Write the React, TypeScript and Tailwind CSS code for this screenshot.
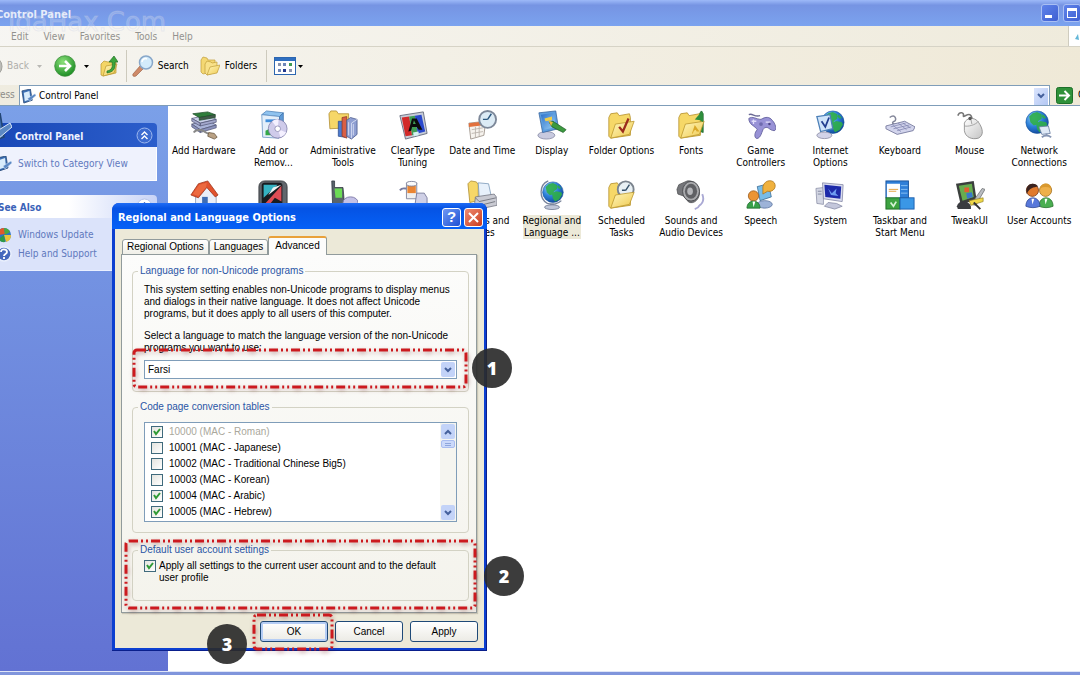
import type { ReactNode } from 'react';

const globe = (cx: number, cy: number, r: number) => (
  <g>
    <circle cx={cx} cy={cy} r={r} fill="url(#ocean)" stroke="#14509a" strokeWidth="0.6" />
    <path
      transform={`translate(${cx - r} ${cy - r}) scale(${r / 10})`}
      d="M3 5 6 2l4-1 4 2 0 4-3 2-1 3-3 1-3-3Zm6 6 4-2 5 1 1 2-3 5-4 2-2-3Zm6-8 3 3-2 1-2-2Z"
      fill="#2fae48"
      opacity="0.9"
    />
  </g>
);

const folder = (
  <g>
    <path d="M3 8 5 4l7-1 2 3 11-2 1 4v19L5 30 3 28Z" fill="#f6d868" stroke="#b08a22" strokeWidth="0.8" />
    <path d="m5 30 5-15 20-3-5 14Z" fill="url(#paperYellow)" stroke="#b89328" strokeWidth="0.8" />
  </g>
);

const art: Record<string, ReactNode> = {
  hardware: (
    <g strokeWidth="0.8">
      <path d="m3 15 9 6 17-5-9-5Z" fill="#a9b3d8" stroke="#55597a" />
      <path d="M3 15v3l9 6v-3Zm9 6v3l17-5v-3Z" fill="#8a92bd" stroke="#55597a" />
      <path d="m3 9 9 5 17-4-8-5Z" fill="#c9cfe8" stroke="#55597a" />
      <path d="M3 9v3l9 5v-3Zm9 5v3l17-4v-3Z" fill="#a3a8cc" stroke="#55597a" />
      <path d="m4 4 7 4 17-3-8-3Z" fill="#2f7d3b" stroke="#1f4f2a" />
      <path d="m11 8 17-3v3l-17 3Z" fill="#44584b" stroke="#1f4f2a" />
      <path d="M5 24c3-4 10-3 13 0 3 2 6 2 9 3" fill="none" stroke="#888" strokeWidth="2" />
      <path d="m21 24 6 1 3 4-3 2-7-3Z" fill="#b9a184" stroke="#66533b" />
    </g>
  ),
  programs: (
    <g strokeWidth="0.8">
      <path d="M4 5 9 1l18 2-4 4Z" fill="#8fc3ef" stroke="#4b7fb5" />
      <path d="m4 5 19 2-1 23-17-1Z" fill="#e4effa" stroke="#5f8fc0" />
      <path d="m23 7 4-4v23l-5 4Z" fill="#5d9ad8" stroke="#3b6fa8" />
      <path d="M8 10h11v3H8Z" fill="#3f8edc" />
      <path d="m8 22 6-3 1 8H8Z" fill="#33a848" />
      <circle cx="21" cy="20" r="10" fill="#cfcbea" stroke="#7a78a4" />
      <path d="M21 20 15 12a10 10 0 0 1 7-2Zm0 0 9 4a10 10 0 0 1-6 5Z" fill="#f4f0ff" />
      <circle cx="21" cy="20" r="3" fill="#fff" stroke="#8583ae" />
    </g>
  ),
  admin: (
    <g strokeWidth="0.8">
      <path d="M1 4 3 1h6l2 3h11v15L2 20Z" fill="#f6d768" stroke="#ac882c" />
      <path d="M11 12h7v17l-7-1Z" fill="#4c7bd0" stroke="#2c4c8c" />
      <path d="m15 8 5-1v23l-5-2Z" fill="#d95f45" stroke="#8b3827" />
      <path d="m20 11 4-3 7 2v16l-6 5-5-3Z" fill="#8f9fd2" stroke="#46558a" />
      <path d="m25 14 6-4M25 14v16M22 13v14M27 15v12" stroke="#e6ebfa" />
    </g>
  ),
  cleartype: (
    <g>
      <path d="m2 6 25-4 4 23-23 6Z" fill="#c7ccd8" stroke="#6a6f80" />
      <path d="m4 8 8-1 3 20-7 1Z" fill="#d22a2a" />
      <path d="m12 7 6-1 3 19-6 2Z" fill="#3f9d55" />
      <path d="m18 6 7-1 4 18-8 2Z" fill="#2948cc" />
      <path d="M11 23 15 9h5l6 12h-4l-2-3h-5l-1 4Zm5-8h3l-2-4Z" fill="#0b0b0b" />
      <path d="m16 24 6-1v4l-5 1Z" fill="#d5f2f2" />
    </g>
  ),
  date: (
    <g strokeWidth="0.9">
      <path d="m2 14 18-2-2 15-14 4Z" fill="#f6f3ee" stroke="#9a8f86" />
      <path d="m2 14 18-2v4L2 18Z" fill="#e2703c" />
      <path d="m5 21 12-2M5 25l12-2M9 18v11M13 17v11" stroke="#b8b0aa" />
      <circle cx="22" cy="10" r="9" fill="#dcebf5" stroke="#7d8899" strokeWidth="2" />
      <path d="m22 10 4-6M22 10h-5" stroke="#2b587f" strokeWidth="1.5" fill="none" />
    </g>
  ),
  display: (
    <g strokeWidth="0.8">
      <ellipse cx="10" cy="27" rx="9" ry="4" fill="#c8cadf" stroke="#80839f" />
      <path d="m2 3 18-2 3 19-17 4Z" fill="#5e9fe0" stroke="#34629c" />
      <path d="m4 5 14-2 2 15-12 3Z" fill="url(#screen)" />
      <path d="m8 9 8-2v4l-7 1Z" fill="#f0cf4a" />
      <path d="m13 13 4-1 14 9-3 3-12-6Z" fill="#3c9a3f" stroke="#1f5f28" />
      <path d="m12 11 5 2-2 4Z" fill="#e8b93b" />
    </g>
  ),
  folderOptions: <g>{folder}<path d="m14 18 4 5 6-14" fill="none" stroke="#9b2b1c" strokeWidth="2.4" /></g>,
  fonts: (
    <g>
      <path d="m19 13 8-12 2 3v20l-6-2Z" fill="#2e8f3c" stroke="#1d5f29" strokeWidth="0.8" />
      {folder}
      <path d="m17 25 3-9 5 7h-3l-1-2-2 1-1 3Z" fill="#d9a829" />
      <path d="m20 10 8-9 1 12-3-2Z" fill="#2e8f3c" />
    </g>
  ),
  game: (
    <g>
      <path d="M3 5c4-2 6 3 12 1" fill="none" stroke="#6b6a95" strokeWidth="1.5" />
      <path d="M3 9c4-3 8 1 13 1 5-3 9-3 12 1 4 4 5 11 2 11-5 0-6-5-10-3-3 1-3 9-7 11-4 2-5-5-1-9-2-4-9-5-9-12Z" fill="#9892d6" stroke="#5f5c9a" strokeWidth="0.9" />
      <path d="M8 10v5M6 12h5M21 13h5" stroke="#e1defa" strokeWidth="1.4" />
      <circle cx="25" cy="15" r="1.3" fill="#4c4786" />
      <circle cx="16" cy="15" r="2" fill="#6e6aae" />
    </g>
  ),
  internet: (
    <g>
      {globe(19, 13, 12)}
      <path d="m2 7 14-2 3 15-13 3Z" fill="#cfe4fa" stroke="#4d80b8" strokeWidth="1.4" />
      <path d="m7 12 4 6 4-10" fill="none" stroke="#223e8f" strokeWidth="1.9" />
      <ellipse cx="10" cy="27" rx="8" ry="3.5" fill="#d2d3e8" stroke="#85879f" strokeWidth="0.8" />
    </g>
  ),
  keyboard: (
    <g>
      <path d="M5 8c6-5 8 3 5 4s-3 4 4 3" fill="none" stroke="#84879a" strokeWidth="1.6" />
      <path d="m1 17 20-5 11 6-2 4-17 4L1 20Z" fill="#d2d4ec" stroke="#72769a" strokeWidth="0.9" />
      <path d="m6 18 16-4M9 20l17-4M13 22l15-4M8 16l9 7M14 14l9 7M19 14l8 5" stroke="#8084b0" strokeWidth="0.8" />
    </g>
  ),
  mouse: (
    <g>
      <path d="M3 6c2-5 7-3 6 0s6-4 8 0 1 4 2 5" fill="none" stroke="#777" strokeWidth="1.7" />
      <path d="M10 14c2-6 11-7 15-1 5 7 6 14 0 17-7 2-14-1-15-8Z" fill="url(#silver)" stroke="#8a8a8a" strokeWidth="0.9" />
      <path d="M10 17c4 1 12-1 15-5M18 15l-1-5" fill="none" stroke="#999" strokeWidth="0.9" />
      <circle cx="16" cy="9" r="1.8" fill="#555" />
    </g>
  ),
  network: (
    <g>
      {globe(14, 13, 12)}
      <path d="m16 18 10-1 2 8-9 1Z" fill="#dfe9f6" stroke="#7082a5" strokeWidth="0.9" />
      <path d="M19 29c4-3 7-2 10 0M24 25v3" fill="none" stroke="#8796b4" strokeWidth="2" />
    </g>
  ),
  home: (
    <g>
      <path d="m7 14 12-9 10 12v12l-13 3-9-5Z" fill="#e9eef8" stroke="#8793ad" strokeWidth="0.8" />
      <path d="M2 16 10 4 20 1l11 15-3 2-9-10L10 19Z" fill="#e2532e" stroke="#9a3318" strokeWidth="0.8" />
      <path d="m11 5 8-2-1 5-8 9-6-2Z" fill="#ec6a40" />
      <path d="M14 18h6v13h-6Z" fill="#3e6db4" />
    </g>
  ),
  shield: (
    <g>
      <rect x="1" y="1" width="30" height="30" rx="6" fill="#61666c" stroke="#3a3d41" />
      <rect x="4" y="3" width="22" height="27" rx="3" fill="#191c20" />
      <path d="M6 5h15L6 19Z" fill="#35b2c2" />
      <path d="m5 28 20-22v17l-7-4-7 9Z" fill="#de4d55" />
      <path d="m11 16 5-8 9-3Z" fill="#eef4f4" />
    </g>
  ),
  phone: (
    <g>
      <path d="M4 1h3v7h9l2 22H5Z" fill="#59646b" stroke="#2d363c" strokeWidth="0.8" />
      <path d="M7 9h8v10H8Z" fill="#6cdb55" />
      <ellipse cx="24" cy="24" rx="8" ry="6" fill="#c4c1e6" stroke="#7c78a8" />
    </g>
  ),
  power: (
    <g>
      <path d="M2 11c3-4 6-1 8-2" fill="none" stroke="#777ba0" strokeWidth="2" />
      <path d="M9 3h11v17H9Z" fill="#efefef" stroke="#82869d" />
      <path d="M10 6h9v8h-9Z" fill="#ea8533" />
      <ellipse cx="14.500" cy="4" rx="5.500" ry="2.500" fill="#fafafa" stroke="#82869d" />
      <path d="M20 14h8l3 5v8H18Z" fill="#cfd0e6" stroke="#7c7e9f" />
    </g>
  ),
  printer: (
    <g strokeWidth="0.8">
      <path d="m1 4 3-3 6 1 2 3v17l-9 2Z" fill="#f6d768" stroke="#a9882b" />
      <path d="m12 3 11 1 3 14-13 1Z" fill="#e8f1fb" stroke="#7393b4" />
      <path d="m9 18 20-3 3 4v8l-19 4-5-5Z" fill="#c9cad2" stroke="#70727e" />
      <path d="m9 19 4 4 18-4M14 27l16-4" fill="none" stroke="#62646e" />
    </g>
  ),
  regional: (
    <g>
      {globe(17, 13, 11)}
      <path d="M12 1C2 5 2 20 11 25c6 2 12 0 15-3" fill="none" stroke="#78839a" strokeWidth="1.4" />
      <path d="M14 25h4v3h-4Z" fill="#8792a6" />
      <ellipse cx="16" cy="29" rx="8" ry="2.500" fill="#bfc6d8" stroke="#66708a" strokeWidth="0.8" />
    </g>
  ),
  scheduled: (
    <g>
      <path d="M3 8 5 4l7-1 2 3 11-2 1 4v19L5 30 3 28Z" fill="#f6d868" stroke="#b08a22" strokeWidth="0.8" />
      <circle cx="21" cy="10" r="8.500" fill="#e8f0f4" stroke="#7b848e" strokeWidth="2" />
      <path d="m21 11 4-6M21 11h-4" fill="none" stroke="#35516a" strokeWidth="1.5" />
      <path d="m5 30 5-14 20-3-5 13Z" fill="url(#paperYellow)" stroke="#b89328" strokeWidth="0.8" />
    </g>
  ),
  sounds: (
    <g>
      <path d="M24 28c5-3 6-8 4-13M20 31c3-1 5-3 6-5" fill="none" stroke="#aaa9d4" strokeWidth="2" />
      <path d="M1 10 3 5l9-4c8-1 14 6 13 14s-9 12-13 7l-4-5-6-2Z" fill="#75767a" stroke="#4c4d50" strokeWidth="0.8" />
      <ellipse cx="16" cy="12" rx="9" ry="10.500" fill="#a9aaad" stroke="#4d4e52" />
      <ellipse cx="16" cy="12" rx="6.500" ry="8" fill="#5f6064" />
      <ellipse cx="15" cy="12" rx="3" ry="4" fill="#b5b6ba" />
    </g>
  ),
  speech: (
    <g strokeWidth="0.8">
      <path d="m12 7 12-3 3 14-12 4Z" fill="#78bce8" stroke="#35668f" />
      <ellipse cx="20" cy="26" rx="8" ry="4" fill="#9db3d8" stroke="#57709c" />
      <path d="M18 7c2-8 12-8 13-2 1 5-4 8-8 7l-5 3Z" fill="#f0b13e" stroke="#a9741b" />
      <circle cx="8" cy="17" r="5.500" fill="#eb9434" stroke="#935314" />
      <path d="M1 30c0-10 14-10 14 0Z" fill="#38a149" stroke="#1f6b2c" />
      <path d="m7 23 1 6 2-6Z" fill="#fff" />
    </g>
  ),
  system: (
    <g strokeWidth="0.8">
      <path d="m1 9 8-1v18l-7-1Z" fill="#d3d6e3" stroke="#8a8ea5" />
      <path d="M3 12h4M3 15h4" stroke="#6e748f" />
      <path d="m8 3 22 2-1 18-20-3Z" fill="#d9dcee" stroke="#7d81a0" />
      <path d="m10 5 18 2-1 13-16-2Z" fill="#1d2aa9" />
      <path d="m14 9 4 5 5-5-1 5 3 3-8-1Z" fill="#6d9cf2" />
      <path d="m14 24 9 1 6 3-8 3-11-3Z" fill="#c4c7db" stroke="#8286a2" />
    </g>
  ),
  taskbar: (
    <g>
      <rect x="1" y="1" width="24" height="18" fill="#2f7fd8" stroke="#1b559c" />
      <rect x="2" y="4" width="14" height="15" fill="#fff" />
      <path d="M4 10h10M4 12h8" stroke="#e5a13c" />
      <path d="M17 6h7M17 10h7M17 14h7" stroke="#8bc2f5" />
      <rect x="1" y="19" width="15" height="12" fill="#3da341" stroke="#1f6d26" />
      <rect x="16" y="19" width="15" height="12" fill="#3a97e6" stroke="#1d5fae" />
      <path d="m6 24 3 4 3-5" fill="none" stroke="#d6f3d6" strokeWidth="1.800" />
    </g>
  ),
  tweak: (
    <g>
      <path d="m1 4 19-3 3 20-17 5Z" fill="#3b3f3d" />
      <path d="m4 6 14-2 2 14-12 4Z" fill="#68ad4f" />
      <path d="M10 8h5v5h-5Z" fill="#e25d33" />
      <path d="m12 14 6-1 1 5-6 2Z" fill="#3a78cc" />
      <path d="M2 28c2-7 12-7 15 0v3H3Z" fill="#3a3c40" />
      <path d="m17 26 12-17 3 1-10 17Z" fill="#b9bcc0" stroke="#5c5e60" strokeWidth="0.700" />
      <path d="m15 22 15-3v4l-13 4Z" fill="#f0d848" stroke="#8e7d1f" strokeWidth="0.700" />
      <path d="m20 24 7 7" stroke="#333" strokeWidth="2" />
    </g>
  ),
  users: (
    <g strokeWidth="0.8">
      <path d="M16 28c0-12 15-12 15 0-4 2-11 2-15 0Z" fill="#4aae50" stroke="#256d2a" />
      <circle cx="23" cy="11" r="6.500" fill="#eeb04a" stroke="#9b6a1a" />
      <path d="M2 28c0-12 15-12 15 0-4 2-11 2-15 0Z" fill="#5878da" stroke="#2c448f" />
      <circle cx="9" cy="11" r="6.500" fill="#e07a2e" stroke="#713312" />
      <path d="M3 15C0 2 13 2 15 7c-5 1-9 1-12 8Z" fill="#3a2320" />
      <path d="M17 9c1-7 12-7 12 0-4-2-8-2-12 0Z" fill="#d9992f" />
      <path d="m8 20 1 6 2-6Zm14 0 1 6 2-6Z" fill="#fff" />
    </g>
  ),
};

const applets = [
  ['hardware', 'Add Hardware'],
  ['programs', 'Add or\nRemov...'],
  ['admin', 'Administrative\nTools'],
  ['cleartype', 'ClearType\nTuning'],
  ['date', 'Date and Time'],
  ['display', 'Display'],
  ['folderOptions', 'Folder Options'],
  ['fonts', 'Fonts'],
  ['game', 'Game\nControllers'],
  ['internet', 'Internet\nOptions'],
  ['keyboard', 'Keyboard'],
  ['mouse', 'Mouse'],
  ['network', 'Network\nConnections'],
  ['home', ''],
  ['shield', ''],
  ['phone', ''],
  ['power', ''],
  ['printer', 'Printers and\nFaxes'],
  ['regional', 'Regional and\nLanguage ...'],
  ['scheduled', 'Scheduled\nTasks'],
  ['sounds', 'Sounds and\nAudio Devices'],
  ['speech', 'Speech'],
  ['system', 'System'],
  ['taskbar', 'Taskbar and\nStart Menu'],
  ['tweak', 'TweakUI'],
  ['users', 'User Accounts'],
];

const codePages = [
  { name: '10000 (MAC - Roman)', on: true, locked: true },
  { name: '10001 (MAC - Japanese)', on: false },
  { name: '10002 (MAC - Traditional Chinese Big5)', on: false },
  { name: '10003 (MAC - Korean)', on: false },
  { name: '10004 (MAC - Arabic)', on: true },
  { name: '10005 (MAC - Hebrew)', on: true },
];

function Gradients() {
  return (
    <svg className="absolute size-0" aria-hidden="true">
      <defs>
        <radialGradient id="ocean" cx="0.35" cy="0.3" r="0.8">
          <stop offset="0" stopColor="#8fd0fa" />
          <stop offset="0.5" stopColor="#2b7fd8" />
          <stop offset="1" stopColor="#0e3f8f" />
        </radialGradient>
        <linearGradient id="paperYellow" x1="0" y1="0" x2="1" y2="1">
          <stop offset="0" stopColor="#fff7bd" />
          <stop offset="1" stopColor="#efc94f" />
        </linearGradient>
        <linearGradient id="screen" x1="0" y1="0" x2="1" y2="1">
          <stop offset="0" stopColor="#2a6fc9" />
          <stop offset="1" stopColor="#9fd3f7" />
        </linearGradient>
        <linearGradient id="silver" x1="0" y1="0" x2="1" y2="1">
          <stop offset="0" stopColor="#ffffff" />
          <stop offset="1" stopColor="#c4c4c4" />
        </linearGradient>
        <radialGradient id="leaf" cx="0.4" cy="0.3" r="0.7">
          <stop offset="0" stopColor="#8be07a" />
          <stop offset="1" stopColor="#1f8f26" />
        </radialGradient>
      </defs>
    </svg>
  );
}

function Caret({ className = '' }: { className?: string }) {
  return (
    <svg className={`w-[5px] h-[3px] ${className}`} viewBox="0 0 5 3" aria-hidden="true">
      <path d="M0 0h5L2.500 3Z" fill="currentColor" />
    </svg>
  );
}

function Chevron({ up = false }: { up?: boolean }) {
  return (
    <svg className="w-2 h-[6px]" viewBox="0 0 8 6" aria-hidden="true">
      <path d={up ? 'M1 5 4 2l3 3' : 'M1 1l3 3 3-3'} fill="none" stroke="#44609c" strokeWidth="2" />
    </svg>
  );
}

function PanelGlyph({ className }: { className: string }) {
  return (
    <svg className={className} viewBox="0 0 16 16" aria-hidden="true">
      <path d="M1 2 10 0l2 12-9 3Z" fill="#3d6fb3" stroke="#234675" strokeWidth="0.800" />
      <path d="m3 4 6-2 1 9-6 2Z" fill="#d9ecfb" />
      <path d="m7 10 8-5 1 2-7 6Z" fill="#5b88c4" stroke="#dbe8f7" strokeWidth="0.500" />
    </svg>
  );
}

function TitleBar() {
  return (
    <header className="flex h-[26px] items-center bg-linear-to-b from-[#9db9f8] via-[#7694e3] via-20% to-[#7ba3ef] pl-7 pr-[7px]">
      <h1 className="grow pt-1 text-[11px] font-bold text-[#e6ecfb]">Control Panel</h1>
      <div className="flex gap-1">
        <button aria-label="Minimize" className="flex size-[18px] items-end rounded-[3px] border border-[#a9bff3] bg-linear-to-br from-[#5f83ea] to-[#3f5fd2] p-[3px]">
          <span className="h-[3px] w-[7px] bg-white" />
        </button>
        <button aria-label="Maximize" className="size-[18px] rounded-[3px] border border-[#a9bff3] bg-linear-to-br from-[#5f83ea] to-[#3f5fd2] p-[3px]">
          <span className="block size-[10px] border border-t-[3px] border-white" />
        </button>
      </div>
    </header>
  );
}

function MenuBar() {
  return (
    <nav className="flex h-[21px] border-b border-[#d6d3c6] bg-linear-to-r from-[#f7f6f3] to-[#efebdc] text-[#93928e]">
      <div className="flex grow items-center gap-[15px] pl-[43px] pt-px">
        {['Edit', 'View', 'Favorites', 'Tools', 'Help'].map((m) => (
          <button key={m}>{m}</button>
        ))}
      </div>
      <div className="flex w-5 items-center justify-center border-l border-[#cfccbf] bg-white">
        <svg className="size-2" viewBox="0 0 8 8" aria-hidden="true">
          <path d="M3 2 0 7l4 1Z" fill="#63b7d8" />
        </svg>
      </div>
    </nav>
  );
}

function Toolbar() {
  return (
    <div className="flex h-[38px] items-center bg-linear-to-r from-[#f6f5f1] to-[#efe9d7] pl-[14px]">
      <button className="flex items-center gap-1 text-[#b0afab]">
        <svg className="size-[21px]" viewBox="0 0 22 22" aria-hidden="true">
          <circle cx="11" cy="11" r="10" fill="#bcbcb8" stroke="#9f9f9a" />
          <path d="M16 11H6m5-5-5 5 5 5" fill="none" stroke="#fff" strokeWidth="2.500" />
        </svg>
        Back
      </button>
      <Caret className="ml-2 text-[#b9b8b4]" />
      <button aria-label="Forward" className="ml-3">
        <svg className="size-[22px]" viewBox="0 0 22 22" aria-hidden="true">
          <circle cx="11" cy="11" r="10.300" fill="url(#leaf)" stroke="#3b8f3a" strokeWidth="0.800" />
          <path d="M5 11h11m-5-5 5 5-5 5" fill="none" stroke="#fff" strokeWidth="2.600" />
        </svg>
      </button>
      <Caret className="ml-2" />
      <button aria-label="Up" className="ml-[11px]">
        <svg className="h-[22px] w-[18px]" viewBox="0 0 18 22" aria-hidden="true">
          <path d="m1 9 3-3 4 1 8-1v12L3 21l-2-1Z" fill="#f3d566" stroke="#b9962f" strokeWidth="0.700" />
          <path d="m3 21 3-10 11-2-3 9Z" fill="url(#paperYellow)" stroke="#b9962f" strokeWidth="0.700" />
          <path d="M7 16c5-1 6-4 5-9H9l5-6 4 6h-3c1 7-2 10-8 11Z" fill="#3da63c" stroke="#1f7025" strokeWidth="0.700" />
        </svg>
      </button>
      <span className="ml-2 h-8 w-px bg-[#cdcabd]" />
      <button className="ml-[5px] flex items-center gap-1">
        <svg className="size-[22px]" viewBox="0 0 22 22" aria-hidden="true">
          <path d="m1 19 7-8 3 3-7 7c-2 1-4 0-3-2Z" fill="#cf8a68" stroke="#96573a" strokeWidth="0.600" />
          <circle cx="14" cy="7.500" r="6.500" fill="#d3ebfb" stroke="#88a7c9" strokeWidth="1.500" />
          <path d="M10 7c0-3 3-4 5-3" stroke="#fff" strokeWidth="1.500" fill="none" />
        </svg>
        Search
      </button>
      <button className="ml-[11px] flex items-center gap-[5px]">
        <svg className="size-5" viewBox="0 0 20 20" aria-hidden="true">
          <path d="m1 4 2-3 4 1 1 2h7v11L3 18l-2-2Z" fill="#f4d873" stroke="#c09d3a" strokeWidth="0.700" />
          <path d="m5 8 2-3 4 1 1 1 5-1v10L7 19l-2-2Z" fill="#f8e189" stroke="#c09d3a" strokeWidth="0.700" />
          <path d="m7 19 3-8 10-2-3 8Z" fill="url(#paperYellow)" stroke="#c09d3a" strokeWidth="0.700" />
        </svg>
        Folders
      </button>
      <span className="ml-[9px] h-8 w-px bg-[#cdcabd]" />
      <button aria-label="Views" className="ml-[7px] flex items-center gap-[2px]">
        <svg className="h-[18px] w-[22px]" viewBox="0 0 22 18" aria-hidden="true">
          <rect x="0.500" y="0.500" width="21" height="17" fill="#fff" stroke="#2c66b0" />
          <path d="M1 1h20v3H1Z" fill="#2f6fc0" />
          <path d="M4 6h3v3H4Zm11 6h3v3h-3Z" fill="#8a94ae" />
          <path d="M9 6h3v3H9Zm-5 6h3v3H4Z" fill="#6f87b9" />
          <path d="M15 6h3v3h-3Z" fill="#3f9a52" />
          <path d="M9 12h3v3H9Z" fill="#243a8e" />
        </svg>
        <Caret />
      </button>
    </div>
  );
}

function AddressBar() {
  return (
    <div className="flex h-[21px] items-center border-b border-[#7f9db9] bg-linear-to-r from-[#efece0] to-[#efe9d7] pl-[11px]">
      <label htmlFor="address" className="w-10 shrink-0 text-[#8d8c88]">Address</label>
      <div className="flex h-full grow items-center border border-b-0 border-[#7f9db9] bg-white pt-px">
        <PanelGlyph className="ml-[1px] size-[15px] shrink-0" />
        <input id="address" defaultValue="Control Panel" className="ml-[3px] min-w-0 grow bg-transparent outline-none" />
        <button aria-label="Address history" className="mr-px flex h-[17px] w-[14px] items-center justify-center bg-linear-to-br from-[#dbe5fd] to-[#b3c7f3]">
          <Chevron />
        </button>
      </div>
      <button className="ml-[6px] flex w-8 shrink-0 items-center gap-[5px]">
        <svg className="size-[17px] shrink-0" viewBox="0 0 17 17" aria-hidden="true">
          <rect x="0.500" y="0.500" width="16" height="16" rx="2" fill="#2f9139" stroke="#1d6f29" />
          <path d="M3 8.500h10M8.500 4l4.500 4.500L8.500 13" fill="none" stroke="#fff" strokeWidth="2" />
        </svg>
        Go
      </button>
    </div>
  );
}

function Sidebar() {
  return (
    <aside className="flex w-[200px] shrink-0 flex-col gap-[14px] bg-linear-to-b from-[#7ba0e8] to-[#6272d3] pl-3 pr-[11px] pt-[17px] text-[#5f79bd]">
      <section>
        <div className="flex h-6 items-center gap-[3px] rounded-t bg-linear-to-r from-[#1746b5] to-[#2c5ecb] pr-1">
          <PanelGlyph className="-mt-3 size-8 shrink-0" />
          <h2 className="grow pt-[3px] font-bold text-[#eef3ff]">Control Panel</h2>
          <button aria-label="Collapse Control Panel">
            <svg className="size-[17px]" viewBox="0 0 17 17" aria-hidden="true">
              <circle cx="8.500" cy="8.500" r="7.500" fill="#3c6bd0" stroke="#9db7ee" />
              <path d="m5.500 8 3-3 3 3m-6 4 3-3 3 3" fill="none" stroke="#fff" strokeWidth="1.400" />
            </svg>
          </button>
        </div>
        <div className="flex h-[34px] items-center border border-t-0 border-white bg-[#eff2fd] pl-[15px]">
          <a href="#category" className="flex items-center gap-[6px]">
            <PanelGlyph className="size-4" />
            Switch to Category View
          </a>
        </div>
      </section>
      <section>
        <div className="flex h-[23px] items-center rounded-t bg-linear-to-r from-white from-50% to-[#c8d3f6] pl-[18px] pr-1">
          <h2 className="grow pt-[3px] font-bold text-[#3a62b8]">See Also</h2>
          <button aria-label="Collapse See Also">
            <svg className="size-[17px]" viewBox="0 0 17 17" aria-hidden="true">
              <circle cx="8.500" cy="8.500" r="7.500" fill="#fff" stroke="#b6c3e8" />
              <path d="m5.500 8 3-3 3 3m-6 4 3-3 3 3" fill="none" stroke="#2a4fa8" strokeWidth="1.400" />
            </svg>
          </button>
        </div>
        <ul className="flex h-[53px] flex-col justify-center gap-[3px] border border-t-0 border-[#eaf0ff] bg-[#dbe3fa] pl-[15px]">
          <li>
            <a href="#update" className="flex items-center gap-[6px]">
              <svg className="size-4" viewBox="0 0 16 16" aria-hidden="true">
                <circle cx="8" cy="8" r="7" fill="#2c74c8" />
                <path d="M1 8a7 7 0 0 1 7-7l1 6Z" fill="#df5a2b" />
                <path d="M8 1a7 7 0 0 1 6 4L9 8Z" fill="#4da93f" />
                <path d="M15 8a7 7 0 0 1-5 7L8 8Z" fill="#e8c33a" />
                <path d="m2 12 6-4 1 7a7 7 0 0 1-7-3Z" fill="#2f9a45" />
              </svg>
              Windows Update
            </a>
          </li>
          <li>
            <a href="#help" className="flex items-center gap-[6px]">
              <svg className="size-4" viewBox="0 0 16 16" aria-hidden="true">
                <circle cx="8" cy="8" r="7" fill="#4568bd" stroke="#e9effc" strokeWidth="1.500" />
                <path d="M5 6c0-4 6-3 6 0 0 2-3 2-3 4m0 1v2" fill="none" stroke="#fff" strokeWidth="1.800" />
              </svg>
              Help and Support
            </a>
          </li>
        </ul>
      </section>
    </aside>
  );
}

function Applets() {
  return (
    <main className="grow bg-white pl-px pr-[14px] pt-1">
      <ul className="grid auto-rows-[70px] grid-cols-[repeat(13,minmax(0,1fr))]">
        {applets.map(([icon, label]) => (
          <li key={icon} className="flex flex-col items-center gap-[5px]">
            <svg className="size-[30px] shrink-0" viewBox="0 0 32 32" aria-hidden="true">{art[icon]}</svg>
            {label && (
              <span className={`whitespace-pre text-center leading-3 ${icon === 'regional' ? 'bg-[#ece9d8]' : ''}`}>{label}</span>
            )}
          </li>
        ))}
      </ul>
    </main>
  );
}

function Marker({ className, width, height }: { className: string; width: number; height: number }) {
  return (
    <svg className={`pointer-events-none absolute overflow-visible drop-shadow-[1px_2px_2px_rgba(90,0,0,0.35)] ${className}`} width={width} height={height} aria-hidden="true">
      <rect x="2" y="2" width={width - 4} height={height - 4} rx="3" fill="none" stroke="#cc1a1f" strokeWidth="3" strokeDasharray="9 3 2 3 2 3" />
    </svg>
  );
}

function Step({ n, className }: { n: number; className: string }) {
  return (
    <span className={`absolute flex size-10 items-center justify-center rounded-full bg-[#2b2b2b]/92 font-['Open_Sans','Noto_Sans',sans-serif] text-[18px] font-extrabold text-white ${className}`}>
      {n}
    </span>
  );
}

function Check({ id, on, locked }: { id: string; on: boolean; locked?: boolean }) {
  return (
    <span className="grid size-3 shrink-0">
      <input
        id={id}
        type="checkbox"
        defaultChecked={on}
        disabled={locked}
        className="peer col-start-1 row-start-1 size-3 appearance-none border border-[#3f6a7c] bg-linear-to-br from-[#e4e4df] to-white"
      />
      <svg className="pointer-events-none invisible col-start-1 row-start-1 size-3 peer-checked:visible" viewBox="0 0 12 12" aria-hidden="true">
        <path d="m3 5 2 3 4-5" fill="none" stroke="#2f9a35" strokeWidth="2" />
      </svg>
    </span>
  );
}

const groupStyle = 'rounded-[4px] border border-[#d3d2c4] px-[11px]';
const legendStyle = '-ml-[6px] px-[2px] leading-3 text-[#2a55a5]';
const buttonStyle = 'h-[21px] w-[68px] rounded-[3px] border border-[#1f4a78] bg-linear-to-b from-white to-[#ecebe5]';

function RegionalDialog() {
  return (
    <div
      role="dialog"
      aria-labelledby="dialog-title"
      className="absolute left-[112px] top-[203px] w-[375px] rounded-t-[7px] bg-[#0c3fd0] px-[3px] pb-[3px] font-['Liberation_Sans',Arial,sans-serif] text-[10px] shadow-[inset_-1px_-1px_0_#0a1f8c]"
    >
      <div className="-mx-[3px] flex h-[26px] items-center rounded-t-[7px] bg-linear-to-b from-[#1f6cf5] via-[#0553e4] via-20% to-[#0561f7] pl-[6px] pr-1 pt-[2px]">
        <h2 id="dialog-title" className="grow pt-px font-['DejaVu_Sans_Condensed','DejaVu_Sans',sans-serif] text-[11px] font-bold text-white">
          Regional and Language Options
        </h2>
        <div className="flex gap-[3px]">
          <button aria-label="Help" className="flex size-[19px] items-center justify-center rounded-[3px] border border-white bg-linear-to-br from-[#6f97f3] to-[#1e4fd3] text-[15px] font-bold text-white">
            ?
          </button>
          <button aria-label="Close" className="flex size-[19px] items-center justify-center rounded-[3px] border border-white bg-linear-to-br from-[#ee8a70] to-[#c93a1a]">
            <svg className="size-[11px]" viewBox="0 0 11 11" aria-hidden="true">
              <path d="m1 1 9 9m0-9-9 9" stroke="#fff" strokeWidth="2" />
            </svg>
          </button>
        </div>
      </div>

      <div className="bg-[#ece9d8] pb-[6px] pl-[6px] pr-[6px] pt-[7px]">
        <div role="tablist" className="-mb-px flex items-end pl-px">
          <button role="tab" aria-selected="false" className="h-4 rounded-t-[3px] border border-[#919b9c] bg-linear-to-b from-white to-[#f0efe8] px-1">Regional Options</button>
          <button role="tab" aria-selected="false" className="h-4 rounded-t-[3px] border border-[#919b9c] bg-linear-to-b from-white to-[#f0efe8] px-1">Languages</button>
          <button role="tab" aria-selected="true" className="h-[19px] rounded-t-[3px] border border-b-0 border-[#919b9c] border-t-2 border-t-[#e9a13b] bg-[#fcfcfb] px-[6px] pb-[2px]">Advanced</button>
        </div>

        <div role="tabpanel" className="mr-px flex flex-col border border-[#919b9c] bg-linear-to-b from-[#fcfcfb] to-[#f4f3ec] px-[10px] pb-[11px] pr-[7px] pt-[10px] shadow-[1px_1px_1px_#c9c6b6]">
          <fieldset className={groupStyle}>
            <legend className={legendStyle}>Language for non-Unicode programs</legend>
            <div className="flex flex-col pb-3 pt-[7px] leading-3">
              <p>
                This system setting enables non-Unicode programs to display menus
                <br />
                and dialogs in their native language. It does not affect Unicode
                <br />
                programs, but it does apply to all users of this computer.
              </p>
              <label htmlFor="language" className="mt-[10px]">
                Select a language to match the language version of the non-Unicode programs you want to use:
              </label>
              <div className="mt-[6px] grid h-[19px] items-center border border-[#7f9db9] bg-white">
                <select id="language" defaultValue="Farsi" className="col-start-1 row-start-1 h-full appearance-none bg-transparent pl-[3px] outline-none">
                  <option>Farsi</option>
                </select>
                <span className="pointer-events-none col-start-1 row-start-1 mr-px flex h-[15px] w-[14px] items-center justify-center justify-self-end rounded-[2px] bg-[#c3d3f8]">
                  <Chevron />
                </span>
              </div>
            </div>
          </fieldset>

          <fieldset className={`mt-[9px] ${groupStyle}`}>
            <legend className={legendStyle}>Code page conversion tables</legend>
            <div className="mb-[10px] mt-[9px] flex h-[100px] border border-[#7f9db9] bg-white">
              <ul className="grow pl-[6px] pt-px">
                {codePages.map(({ name, on, locked }) => (
                  <li key={name} className="flex h-4 items-center gap-[6px]">
                    <Check id={name.slice(0, 5)} on={on} locked={locked} />
                    <label htmlFor={name.slice(0, 5)} className={locked ? 'text-[#aaa89c]' : ''}>{name}</label>
                  </li>
                ))}
              </ul>
              <div className="flex w-4 flex-col items-center gap-px bg-[#f5f5f0] py-px">
                <button aria-label="Scroll up" className="flex h-[15px] w-[14px] items-center justify-center rounded-[2px] bg-[#c3d3f8]">
                  <Chevron up />
                </button>
                <span className="flex h-2 w-[14px] flex-col items-center justify-center gap-px rounded-[2px] border border-[#a9bdf0] bg-[#cbd9fa]">
                  <span className="h-px w-[6px] bg-[#8ea6dc]" />
                  <span className="h-px w-[6px] bg-[#8ea6dc]" />
                </span>
                <button aria-label="Scroll down" className="mt-auto flex h-[15px] w-[14px] items-center justify-center rounded-[2px] bg-[#c3d3f8]">
                  <Chevron />
                </button>
              </div>
            </div>
          </fieldset>

          <fieldset className={`mt-[11px] ${groupStyle}`}>
            <legend className={legendStyle}>Default user account settings</legend>
            <div className="flex gap-[3px] pb-4 pt-1 leading-3">
              <Check id="apply-all" on />
              <label htmlFor="apply-all">
                Apply all settings to the current user account and to the default
                <br />
                user profile
              </label>
            </div>
          </fieldset>
        </div>

        <div className="mt-2 flex justify-end gap-[7px]">
          <button className={`${buttonStyle} shadow-[inset_0_0_0_2px_#b5cdf5]`}>OK</button>
          <button className={buttonStyle}>Cancel</button>
          <button className={buttonStyle}>Apply</button>
        </div>
      </div>

      <Marker className="left-5 top-[145px]" width={336} height={41} />
      <Marker className="left-3 top-[336px]" width={353} height={71} />
      <Marker className="left-[140px] top-[410px]" width={82} height={38} />
      <Step n={1} className="left-[360px] top-[145px]" />
      <Step n={2} className="left-[372px] top-[353px]" />
      <Step n={3} className="left-[95px] top-[421px]" />
    </div>
  );
}

export default function App() {
  return (
    <div className="relative flex min-h-screen flex-col overflow-hidden bg-white font-['DejaVu_Sans_Condensed','DejaVu_Sans',sans-serif] text-[10px] leading-3 text-black">
      <Gradients />
      <div className="-ml-8 -mr-2 flex grow flex-col">
        <TitleBar />
        <MenuBar />
        <Toolbar />
        <AddressBar />
        <div className="flex grow">
          <Sidebar />
          <Applets />
        </div>
        <footer className="h-1 border-t border-[#dfe5f7] bg-[#8095dc]" />
      </div>
      <span className="pointer-events-none absolute left-2 top-2 font-['DejaVu_Sans',sans-serif] text-[26px] leading-7 text-white/20 [-webkit-text-stroke:1px_rgba(200,205,225,0.3)]">
        idaHax.Com
      </span>
      <RegionalDialog />
    </div>
  );
}
